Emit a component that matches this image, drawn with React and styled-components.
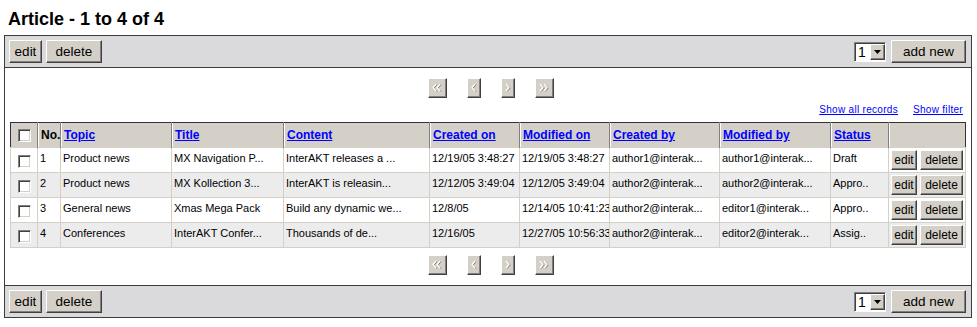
import React from "react";
import styled, { createGlobalStyle } from "styled-components";

const GlobalStyle = createGlobalStyle`
  html, body { margin: 0; padding: 0; background: #fff; }
  body { font-family: "Liberation Sans", Arial, sans-serif; color: #000; }
`;

const Page = styled.div`
  padding: 9px 5px 0 4px;
`;

const Title = styled.h1`
  margin: 0 0 6px 4px;
  font-size: 18px;
  line-height: 20px;
  font-weight: bold;
`;

const Panel = styled.div`
  border: 1px solid #3c3c3c;
`;

const Toolbar = styled.div`
  display: flex;
  justify-content: space-between;
  align-items: center;
  height: 23px;
  padding: 4px 5px 4px 4px;
  background: #dadadc;
  border-top: ${(p) => (p.$bottom ? "1px solid #3c3c3c" : "none")};
  border-bottom: ${(p) => (p.$bottom ? "none" : "1px solid #3c3c3c")};
`;

const Group = styled.div`
  display: flex;
  align-items: center;
  gap: ${(p) => p.$gap || 4}px;
`;

const Button = styled.button`
  box-sizing: border-box;
  width: ${(p) => p.$w}px;
  height: ${(p) => (p.$small ? 20 : 23)}px;
  padding: 0;
  margin: 0;
  font-family: "Liberation Sans", Arial, sans-serif;
  font-size: ${(p) => (p.$small ? 12 : 13.5)}px;
  color: #000;
  background: #d4d0c8;
  border: 1px solid;
  border-color: #ffffff #404040 #404040 #ffffff;
  box-shadow: inset -1px -1px 0 #808080;
  cursor: default;
`;

const SelectBox = styled.div`
  box-sizing: border-box;
  display: flex;
  width: 32px;
  height: 20px;
  border: 1px solid;
  border-color: #808080 #ffffff #ffffff #808080;
  box-shadow: inset 1px 1px 0 #404040;
  background: #fff;
`;

const SelectValue = styled.span`
  flex: 1;
  padding: 1px 0 0 3px;
  font-size: 14px;
  line-height: 16px;
`;

const SelectArrow = styled.span`
  box-sizing: border-box;
  width: 15px;
  height: 16px;
  margin-top: 1px;
  display: flex;
  align-items: center;
  justify-content: center;
  background: #d4d0c8;
  border: 1px solid;
  border-color: #ffffff #404040 #404040 #ffffff;
  box-shadow: inset -1px -1px 0 #808080;
`;

const Content = styled.div`
  padding: 10px 5px 10px 5px;
`;

const Pager = styled.div`
  display: flex;
  justify-content: center;
  gap: 20px;
  padding-left: 5px;
  margin: ${(p) => p.$m || "0"};
`;

const PageButton = styled.span`
  box-sizing: border-box;
  width: ${(p) => p.$w}px;
  height: 20px;
  display: flex;
  align-items: center;
  justify-content: center;
  background: #d4d0c8;
  border: 1px solid;
  border-color: #ffffff #404040 #404040 #ffffff;
  box-shadow: inset -1px -1px 0 #808080;
`;

const Links = styled.div`
  display: flex;
  justify-content: flex-end;
  gap: 15px;
  margin: 6px 3px 6px 0;
  font-size: 10px;
  line-height: 12px;
  letter-spacing: 0.3px;
`;

const Link = styled.a`
  color: #0000ff;
  text-decoration: underline;
`;

const Table = styled.table`
  width: 955px;
  border-collapse: collapse;
  table-layout: fixed;
  border: 1px solid #333;
  font-size: 11px;
`;

const Th = styled.th`
  height: 24px;
  padding: 0 3px;
  text-align: left;
  vertical-align: middle;
  background: #d4d0c8;
  border-left: 1px solid #808080;
  box-shadow: inset 1px 0 0 #fff;
  font-size: 12px;
  font-weight: bold;
  white-space: nowrap;
  overflow: hidden;
  &:first-child { border-left: none; box-shadow: none; text-align: center; }
`;

const HeadLink = styled.a`
  color: #0000ff;
  text-decoration: underline;
`;

const Tr = styled.tr`
  height: 25px;
  background: ${(p) => (p.$alt ? "#ececec" : "#ffffff")};
`;

const Td = styled.td`
  box-sizing: border-box;
  height: 25px;
  padding: 3px 2px 0 2px;
  vertical-align: top;
  border: 1px solid #d4d0c8;
  white-space: nowrap;
  overflow: hidden;
  line-height: 14px;
  text-align: ${(p) => (p.$center ? "center" : "left")};
`;

const ActionCell = styled.td`
  box-sizing: border-box;
  height: 25px;
  padding: 2px 0 0 2px;
  vertical-align: top;
  border: 1px solid #d4d0c8;
  white-space: nowrap;
`;

const Actions = styled.div`
  display: flex;
  gap: 3px;
`;

const Check = styled.span`
  box-sizing: border-box;
  display: inline-block;
  width: 13px;
  height: 13px;
  margin-top: ${(p) => p.$mt || 0}px;
  background: #fff;
  border: 1px solid;
  border-color: #808080 #ffffff #ffffff #808080;
  box-shadow: inset 1px 1px 0 #404040, inset -1px -1px 0 #d4d0c8;
  vertical-align: middle;
`;

const Arrow = ({ dir = "left", double = false }) => {
  const pts = (x) =>
    dir === "left"
      ? `${x + 3},1 ${x},4.5 ${x + 3},8`
      : `${x},1 ${x + 3},4.5 ${x},8`;
  const xs = double ? [1, 5] : [1];
  const w = double ? 10 : 6;
  return (
    <svg width={w} height="10" viewBox={`0 0 ${w} 10`}>
      {xs.map((x) => (
        <polyline key={"s" + x} points={pts(x + 0.5)} transform="translate(0.6,0.6)" fill="none" stroke="#7a7a7a" strokeWidth="1" />
      ))}
      {xs.map((x) => (
        <polyline key={x} points={pts(x)} fill="none" stroke="#ffffff" strokeWidth="1.2" />
      ))}
    </svg>
  );
};

const PagerRow = ({ m }) => (
  <Pager $m={m}>
    <PageButton $w={19}><Arrow dir="left" double /></PageButton>
    <PageButton $w={14}><Arrow dir="left" /></PageButton>
    <PageButton $w={14}><Arrow dir="right" /></PageButton>
    <PageButton $w={19}><Arrow dir="right" double /></PageButton>
  </Pager>
);

const Select = () => (
  <SelectBox>
    <SelectValue>1</SelectValue>
    <SelectArrow>
      <svg width="7" height="4" viewBox="0 0 7 4"><polygon points="0,0 7,0 3.5,4" fill="#000" /></svg>
    </SelectArrow>
  </SelectBox>
);

const Bar = ({ bottom }) => (
  <Toolbar $bottom={bottom}>
    <Group $gap={4}>
      <Button $w={33}>edit</Button>
      <Button $w={56}>delete</Button>
    </Group>
    <Group $gap={5}>
      <Select />
      <Button $w={75}>add new</Button>
    </Group>
  </Toolbar>
);

const columns = [
  { w: 27 },
  { w: 23, label: "No." },
  { w: 111, label: "Topic", link: true },
  { w: 112, label: "Title", link: true },
  { w: 146, label: "Content", link: true },
  { w: 90, label: "Created on", link: true },
  { w: 90, label: "Modified on", link: true },
  { w: 110, label: "Created by", link: true },
  { w: 111, label: "Modified by", link: true },
  { w: 58, label: "Status", link: true },
  { w: 77 },
];

const rows = [
  ["1", "Product news", "MX Navigation P...", "InterAKT releases a ...", "12/19/05 3:48:27", "12/19/05 3:48:27", "author1@interak...", "author1@interak...", "Draft"],
  ["2", "Product news", "MX Kollection 3...", "InterAKT is releasin...", "12/12/05 3:49:04", "12/12/05 3:49:04", "author2@interak...", "author2@interak...", "Appro.."],
  ["3", "General news", "Xmas Mega Pack", "Build any dynamic we...", "12/8/05", "12/14/05 10:41:23", "author2@interak...", "editor1@interak...", "Appro.."],
  ["4", "Conferences", "InterAKT Confer...", "Thousands of de...", "12/16/05", "12/27/05 10:56:33", "author2@interak...", "editor2@interak...", "Assig.."],
];

export default function App() {
  return (
    <Page>
      <GlobalStyle />
      <Title>Article - 1 to 4 of 4</Title>
      <Panel>
        <Bar />
        <Content>
          <PagerRow />
          <Links>
            <Link href="#">Show all records</Link>
            <Link href="#">Show filter</Link>
          </Links>
          <Table>
            <colgroup>
              {columns.map((c, i) => (
                <col key={i} style={{ width: c.w }} />
              ))}
            </colgroup>
            <thead>
              <tr>
                {columns.map((c, i) => (
                  <Th key={i}>
                    {i === 0 ? <Check /> : c.link ? <HeadLink href="#">{c.label}</HeadLink> : c.label}
                  </Th>
                ))}
              </tr>
            </thead>
            <tbody>
              {rows.map((r, ri) => (
                <Tr key={ri} $alt={ri % 2 === 1}>
                  <Td $center><Check $mt={4} /></Td>
                  {r.map((v, ci) => (
                    <Td key={ci}>{v}</Td>
                  ))}
                  <ActionCell>
                    <Actions>
                      <Button $small $w={26}>edit</Button>
                      <Button $small $w={43}>delete</Button>
                    </Actions>
                  </ActionCell>
                </Tr>
              ))}
            </tbody>
          </Table>
          <PagerRow m="7px 0 0 0" />
        </Content>
        <Bar bottom />
      </Panel>
    </Page>
  );
}
